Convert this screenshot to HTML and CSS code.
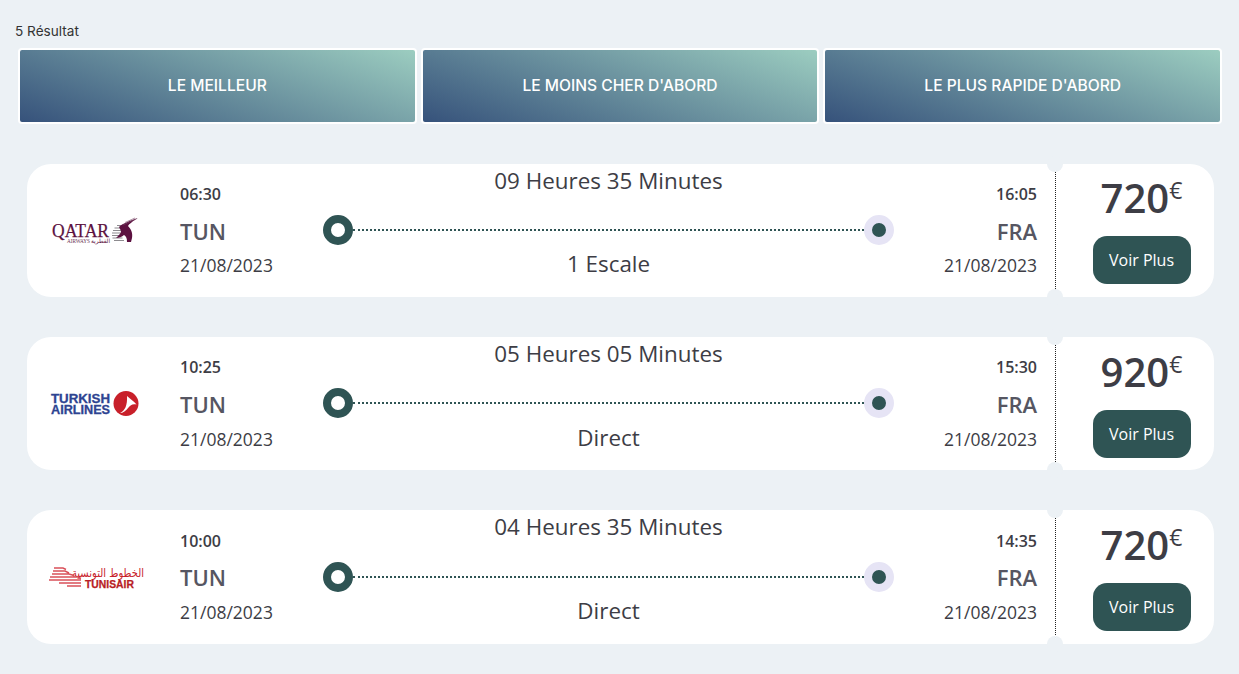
FILE: index.html
```html
<!DOCTYPE html>
<html lang="fr">
<head>
  <meta charset="UTF-8" />
  <title>Résultats des vols</title>
  <link rel="stylesheet" href="styles.css">
</head>

<body>
  <p class="count">5 Résultat</p>

  <div class="tabs">
    <button class="tab">LE MEILLEUR</button>
    <button class="tab">LE MOINS CHER D'ABORD</button>
    <button class="tab">LE PLUS RAPIDE D'ABORD</button>
  </div>

  <section class="flights">
    <article class="flight">
      <div class="airline">
        <svg class="logo" viewBox="0 0 115 50" width="115" height="50">
          <text class="qatar-name" x="17" y="30.500" textLength="57" lengthAdjust="spacingAndGlyphs">QATAR</text>
          <text class="qatar-small" x="32" y="36.500" textLength="23" lengthAdjust="spacingAndGlyphs">AIRWAYS</text>
          <text class="qatar-arabic" x="56" y="36.500" textLength="19" lengthAdjust="spacingAndGlyphs">القطرية</text>
          <g stroke="#8d8b8f" stroke-width="1.100">
            <path d="M82 19.500h8M79.500 22h8M78 24.500h8M77 27h8M77 29.500h9M77.500 32h10M79 34.500h10"/>
          </g>
          <path d="M84 21C88 17 95 15 103 12 98 15 94 18 93 20 96 23 98 27 97 32L96 36 92 36C92 32 91 30 89 29 87 31 84 32 81 32 84 29 86 27 86 25Z" fill="#5c1140"/>
          <path d="M88 19l14-6.500M90 16.500l10-4.500" stroke="#7b4a68" stroke-width=".6" fill="none"/>
        </svg>
      </div>

      <div class="trip">
        <div class="stop">
          <span class="time">06:30</span>
          <span class="code">TUN</span>
          <span class="date">21/08/2023</span>
        </div>
        <div class="route">
          <span class="duration">09 Heures 35 Minutes</span>
          <div class="path">
            <span class="dot-start"></span>
            <span class="path-line"></span>
            <span class="dot-end"></span>
          </div>
          <span class="stops">1 Escale</span>
        </div>
        <div class="stop stop-end">
          <span class="time">16:05</span>
          <span class="code">FRA</span>
          <span class="date">21/08/2023</span>
        </div>
      </div>

      <div class="divider"></div>

      <div class="price-box">
        <div class="price">720<sup>€</sup></div>
        <button class="more">Voir Plus</button>
      </div>
    </article>

    <article class="flight">
      <div class="airline">
        <svg class="logo" viewBox="0 0 115 50" width="115" height="50">
          <text class="turkish-name" x="16" y="23.500" textLength="59" lengthAdjust="spacingAndGlyphs">TURKISH</text>
          <text class="turkish-name" x="16" y="34.500" textLength="59" lengthAdjust="spacingAndGlyphs">AIRLINES</text>
          <circle cx="91" cy="24.500" r="12.500" fill="#c8202a"/>
          <path d="M85 34C90 32 92.500 26 92 17 95 19.500 98.500 22 101.500 25.500 97.500 24.500 95.500 26 93.500 28.500 91 32 88 34 85 34Z" fill="#fff"/>
        </svg>
      </div>

      <div class="trip">
        <div class="stop">
          <span class="time">10:25</span>
          <span class="code">TUN</span>
          <span class="date">21/08/2023</span>
        </div>
        <div class="route">
          <span class="duration">05 Heures 05 Minutes</span>
          <div class="path">
            <span class="dot-start"></span>
            <span class="path-line"></span>
            <span class="dot-end"></span>
          </div>
          <span class="stops">Direct</span>
        </div>
        <div class="stop stop-end">
          <span class="time">15:30</span>
          <span class="code">FRA</span>
          <span class="date">21/08/2023</span>
        </div>
      </div>

      <div class="divider"></div>

      <div class="price-box">
        <div class="price">920<sup>€</sup></div>
        <button class="more">Voir Plus</button>
      </div>
    </article>

    <article class="flight">
      <div class="airline">
        <svg class="logo" viewBox="0 0 115 50" width="115" height="50">
          <text class="tunis-arabic" x="37" y="25" textLength="72" lengthAdjust="spacingAndGlyphs">الخطوط التونسية</text>
          <text class="tunis-name" x="50" y="35.500" textLength="49" lengthAdjust="spacingAndGlyphs">TUNISAIR</text>
          <g fill="none" stroke="#d9505a" stroke-width="1.400">
            <path d="M19 16h9l3 1.500M18 19h12l4 2M17 22h17l5 1.500M15 25h28l3 1.500M14 28h32M24 31h22M32 34h14"/>
          </g>
        </svg>
      </div>

      <div class="trip">
        <div class="stop">
          <span class="time">10:00</span>
          <span class="code">TUN</span>
          <span class="date">21/08/2023</span>
        </div>
        <div class="route">
          <span class="duration">04 Heures 35 Minutes</span>
          <div class="path">
            <span class="dot-start"></span>
            <span class="path-line"></span>
            <span class="dot-end"></span>
          </div>
          <span class="stops">Direct</span>
        </div>
        <div class="stop stop-end">
          <span class="time">14:35</span>
          <span class="code">FRA</span>
          <span class="date">21/08/2023</span>
        </div>
      </div>

      <div class="divider"></div>

      <div class="price-box">
        <div class="price">720<sup>€</sup></div>
        <button class="more">Voir Plus</button>
      </div>
    </article>
  </section>
</body>
</html>
```

FILE: styles.css
```css
body {
  margin: 0;
  height: 674px;
  overflow: hidden;
  background: #ecf1f5;
  font-family: 'Open Sans', sans-serif;
  color: #3d3d45;
}

.count {
  margin: 0;
  padding: 23px 0 0 15px;
  font-family: 'Inter', sans-serif;
  font-size: 13.600px;
  line-height: 17px;
  color: #333;
}

.tabs {
  display: flex;
  gap: 4px;
  margin: 8px 17px 0 18px;
}

.tab {
  flex: 1;
  height: 76px;
  padding-bottom: 2px;
  border: 2px solid #fff;
  border-radius: 4px;
  background: linear-gradient(20deg, #36527b, #9ccdc0);
  color: #fff;
  font-family: 'Inter', sans-serif;
  font-size: 15.600px;
  font-weight: 500;
}

.flights {
  margin: 40px 25px 0 27px;
}

.flight {
  position: relative;
  display: flex;
  height: 133.200px;
  margin-bottom: 40px;
  border-radius: 24px;
  background: #fff;
}

/* ticket notches */
.flight::before,
.flight::after {
  content: "";
  position: absolute;
  left: 1020px;
  width: 16px;
  height: 16px;
  border-radius: 50%;
  background: #ecf1f5;
}

.flight::before {
  top: -8px;
}

.flight::after {
  bottom: -8px;
}

.airline {
  display: flex;
  align-items: center;
  width: 145px;
  padding-left: 8px;
}

.logo {
  overflow: visible;
}

.trip {
  display: grid;
  grid-template-columns: 143px 1fr 143px;
  width: 857px;
}

.stop {
  display: flex;
  flex-direction: column;
  padding-top: 18.200px;
}

.stop-end {
  align-items: flex-end;
}

.time {
  font-size: 16px;
  font-weight: 600;
  line-height: 24px;
}

.code {
  margin-top: 9.800px;
  font-size: 22px;
  font-weight: 600;
  line-height: 30px;
  color: #565662;
}

.date {
  margin-top: 7.400px;
  font-size: 17.500px;
  line-height: 24px;
}

.route {
  display: flex;
  flex-direction: column;
  align-items: center;
  padding-top: 4px;
}

.duration,
.stops {
  font-size: 22.400px;
  line-height: 26px;
}

.path {
  display: flex;
  align-items: center;
  width: 100%;
  margin-top: 21.200px;
}

.dot-start {
  width: 14px;
  height: 14px;
  border: 8px solid #2f5454;
  border-radius: 50%;
  background: #fff;
}

.path-line {
  flex: 1;
  border-top: 2px dotted #2f5454;
}

.dot-end {
  width: 14px;
  height: 14px;
  border: 8px solid #e6e4f5;
  border-radius: 50%;
  background: #2f5454;
}

.stops {
  margin-top: 6.200px;
}

.divider {
  align-self: center;
  height: 117px;
  margin: 0 14px 0 18px;
  border-left: 1px dotted #222;
}

.price-box {
  display: flex;
  flex-direction: column;
  align-items: center;
  width: 143px;
}

.price {
  margin-top: 7.400px;
  font-size: 40px;
  font-weight: 600;
  line-height: 54px;
}

.price sup {
  font-size: 23px;
  font-weight: 400;
  line-height: 0;
  vertical-align: 14px;
}

.more {
  width: 98px;
  height: 48px;
  margin-top: 11px;
  border: none;
  border-radius: 14px;
  background: #2f5454;
  color: #fff;
  font-family: 'Open Sans', sans-serif;
  font-size: 16px;
}

.logo text {
  font-family: 'Liberation Sans', sans-serif;
}

.logo .qatar-name {
  font-family: 'Liberation Serif', serif;
  font-size: 19.500px;
  fill: #5c1140;
  stroke: #5c1140;
  stroke-width: .25px;
}

.logo .qatar-small {
  font-family: 'Liberation Serif', serif;
  font-size: 6px;
  fill: #6d3556;
}

.logo .qatar-arabic {
  font-family: 'DejaVu Sans', sans-serif;
  font-size: 6px;
  fill: #5c1140;
}

.logo .turkish-name {
  font-size: 12.500px;
  font-weight: 700;
  fill: #2d4391;
  stroke: #2d4391;
  stroke-width: .3px;
}

.logo .tunis-arabic {
  font-family: 'DejaVu Sans', sans-serif;
  font-size: 12px;
  fill: #c8202a;
}

.logo .tunis-name {
  font-size: 10px;
  font-weight: 700;
  fill: #b81c24;
  stroke: #b81c24;
  stroke-width: .25px;
}
```
